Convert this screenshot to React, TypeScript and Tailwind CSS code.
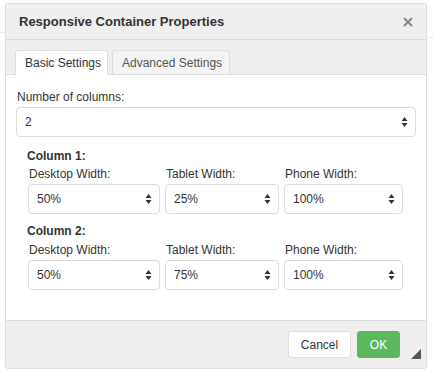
import { X } from "lucide-react";

const font = { fontFamily: '"Liberation Sans", Arial, sans-serif' };

const Arrows = () => (
  <svg width="7" height="11" viewBox="0 0 7 11" className="pointer-events-none absolute right-[8px] top-1/2 -translate-y-1/2">
    <path d="M3.5 0.5 L6.5 4.5 L0.5 4.5 Z" fill="#333" />
    <path d="M0.5 6.5 L6.5 6.5 L3.5 10.5 Z" fill="#333" />
  </svg>
);

type SelectProps = { value: string; options: string[]; width: string };

const Select = ({ value, options, width }: SelectProps) => (
  <div className={`relative ${width}`}>
    <select
      defaultValue={value}
      className="h-[30px] w-full appearance-none rounded-[4px] border border-[#dcdcdc] bg-white pl-[8px] text-[12px] text-[#333] outline-none"
      style={font}
    >
      {options.map((o) => (
        <option key={o}>{o}</option>
      ))}
    </select>
    <Arrows />
  </div>
);

const widths = ["25%", "33%", "50%", "66%", "75%", "100%"];

type GroupProps = { n: number; desktop: string; tablet: string; phone: string; gap: string };

const ColumnGroup = ({ n, desktop, tablet, phone, gap }: GroupProps) => (
  <div className="pl-[12px]">
    <div className="-ml-px h-[16px] text-[12px] font-bold leading-[16px]">Column {n}:</div>
    <div className={`${gap} flex gap-[5px]`}>
      <div>
        <div className="mb-[2px] h-[16px] pl-[1px] leading-[16px]">Desktop Width:</div>
        <Select value={desktop} options={widths} width="w-[132px]" />
      </div>
      <div>
        <div className="mb-[2px] h-[16px] pl-[1px] leading-[16px]">Tablet Width:</div>
        <Select value={tablet} options={widths} width="w-[114px]" />
      </div>
      <div>
        <div className="mb-[2px] h-[16px] pl-[1px] leading-[16px]">Phone Width:</div>
        <Select value={phone} options={widths} width="w-[119px]" />
      </div>
    </div>
  </div>
);

export default function App() {
  return (
    <div className="relative h-[374px] w-[433px] overflow-hidden bg-white text-[12px] text-[#333]" style={font}>
      <div className="absolute left-0 top-[32px] h-px w-[6px] bg-[#e8e8e8]" />
      <div className="absolute right-0 top-[37px] h-px w-[7px] bg-[#e8e8e8]" />

      <div className="ml-[5px] mt-[3px] flex h-[366px] w-[422px] flex-col overflow-hidden rounded-[3px] border border-[#dcdcdc]">
        <div className="flex h-[36px] shrink-0 items-center justify-between border-b border-[#dcdcdc] bg-[#efefef] pl-[13px] pr-[11px]">
          <span className="text-[13px] font-bold text-[#333]">Responsive Container Properties</span>
          <X size={14} strokeWidth={3.5} className="text-[#8a8a8a]" />
        </div>

        <div className="flex h-[35px] shrink-0 items-end gap-[4px] border-b border-[#dcdcdc] bg-[#efefef] pl-[9px]">
          <div className="-mb-px flex h-[25px] w-[93px] items-center rounded-t-[3px] border border-b-0 border-[#dcdcdc] bg-white pl-[9px]">
            Basic Settings
          </div>
          <div className="flex h-[24px] w-[118px] items-center rounded-t-[3px] border border-b-0 border-[#dcdcdc] bg-[#f4f4f4] pl-[9px] text-[#555]">
            Advanced Settings
          </div>
        </div>

        <div className="flex-1 bg-white pl-[10px] pr-[10px] pt-[14px]">
          <div className="mb-[2px] h-[16px] pl-[1px] leading-[16px]">Number of columns:</div>
          <Select value="2" options={["1", "2", "3", "4"]} width="w-[400px]" />

          <div className="mt-[11px]">
            <ColumnGroup n={1} desktop="50%" tablet="25%" phone="100%" gap="mt-[2px]" />
          </div>
          <div className="mt-[9px]">
            <ColumnGroup n={2} desktop="50%" tablet="75%" phone="100%" gap="mt-[3px]" />
          </div>
        </div>

        <div className="relative flex h-[48px] shrink-0 items-center justify-end gap-[6px] border-t border-[#dcdcdc] bg-[#efefef] pr-[26px]">
          <button className="h-[27px] w-[63px] rounded-[3px] border border-[#dcdcdc] bg-white text-[12px] text-[#333]" style={font}>
            Cancel
          </button>
          <button className="h-[27px] w-[43px] rounded-[3px] border border-[#5cb85c] bg-[#5cb85c] text-[12px] text-white" style={font}>
            OK
          </button>
          <svg width="10" height="10" viewBox="0 0 10 10" className="absolute bottom-[9px] right-[5px]">
            <path d="M10 0 L10 10 L0 10 Z" fill="#555" />
          </svg>
        </div>
      </div>
    </div>
  );
}
